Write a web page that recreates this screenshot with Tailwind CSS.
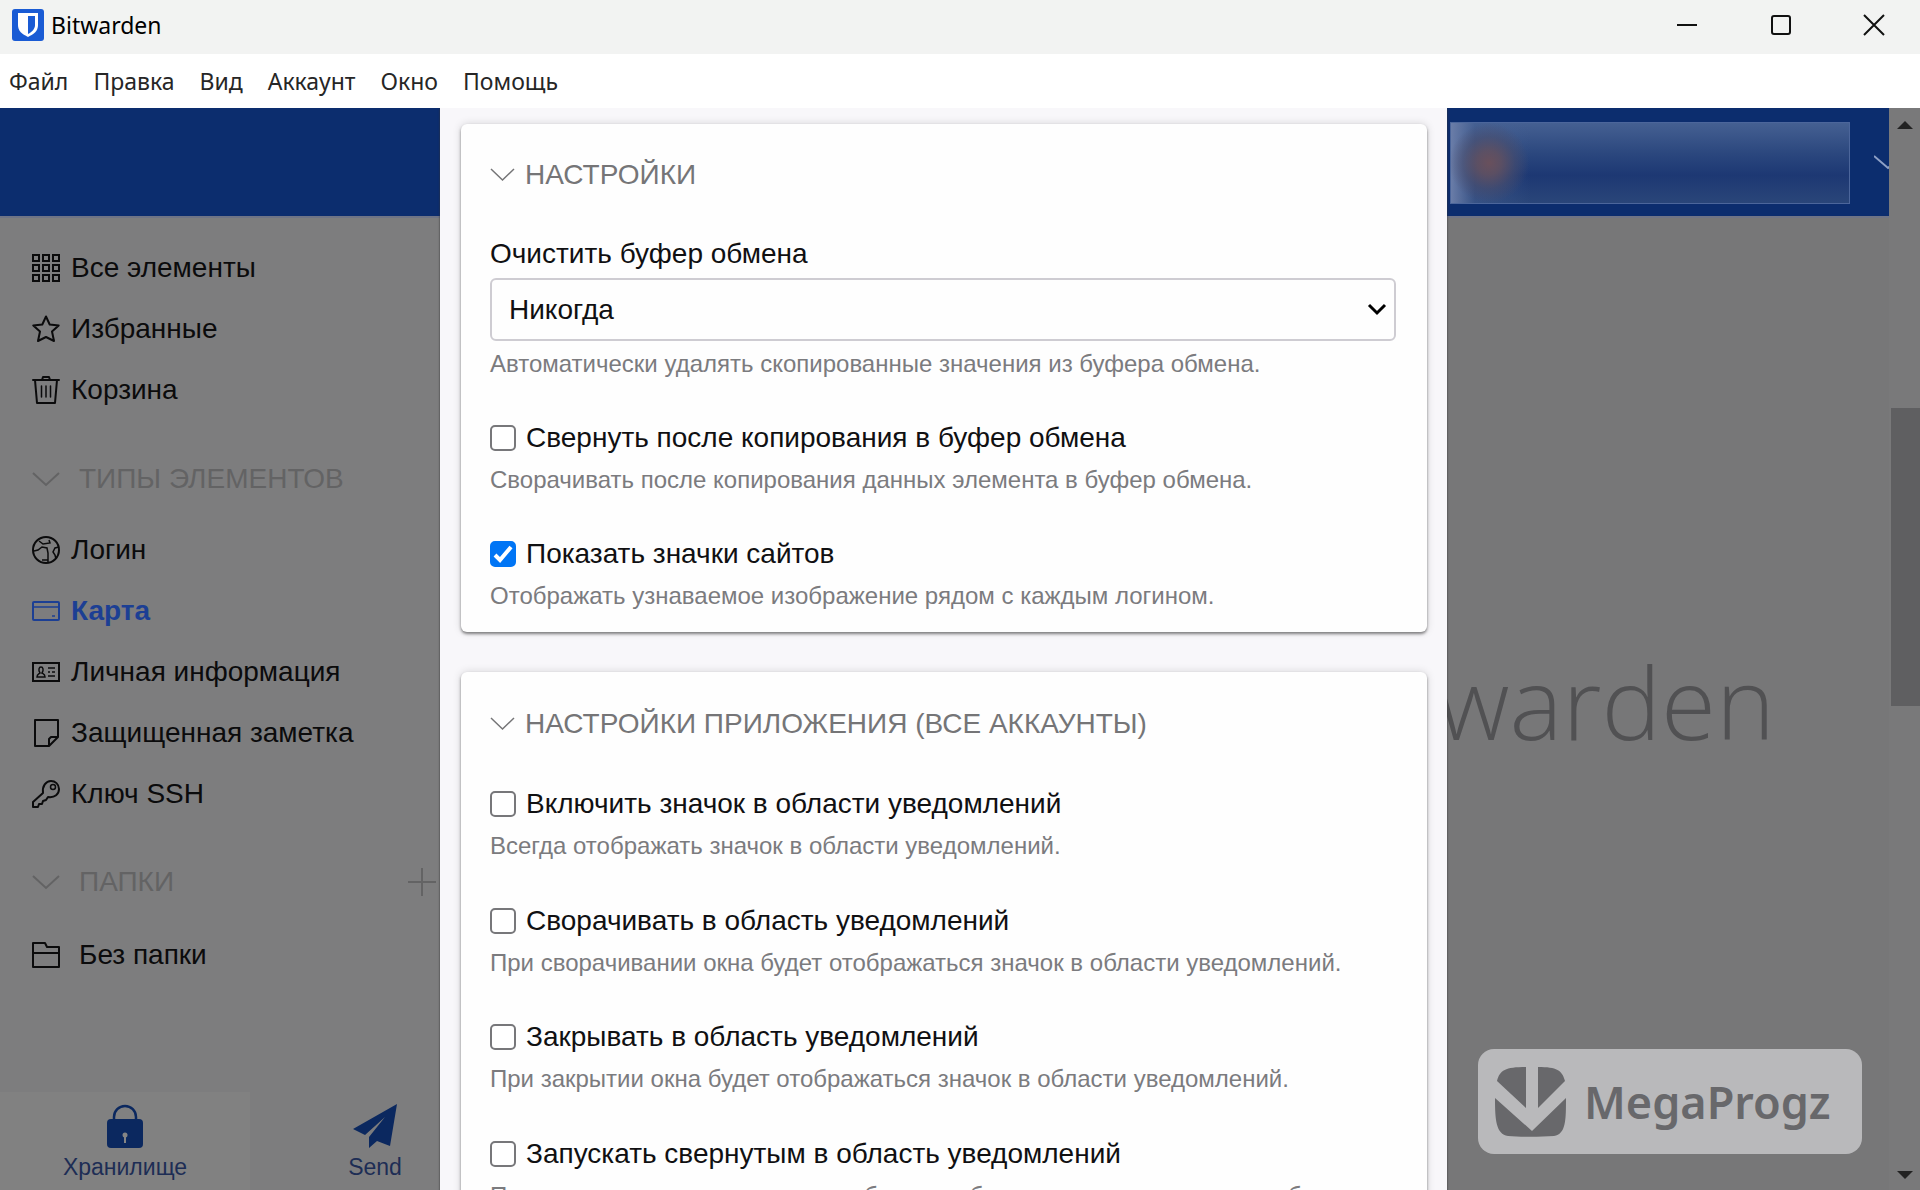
<!DOCTYPE html>
<html lang="ru">
<head>
<meta charset="utf-8">
<title>Bitwarden</title>
<script src="https://cdn.jsdelivr.net/npm/@tailwindcss/browser@4"></script>
</head>
<body class="flex h-screen flex-col overflow-hidden bg-white font-['Liberation_Sans',Arial,sans-serif] text-[28px] text-[#101012]">

<!-- Title bar -->
<header class="flex h-[54px] shrink-0 items-start justify-between bg-[#f2f3f2] font-['Noto_Sans','Open_Sans',sans-serif]">
  <div class="flex h-[50px] items-center gap-[7px] pl-3">
    <svg class="h-8 w-8" viewBox="0 0 32 32"><rect x="0" y="0" width="32" height="32" rx="3" fill="#1a5bd4"/><path d="M6 4h20v12c0 6-4 9-10 12C10 25 6 22 6 16z" fill="#fff"/><path d="M16 7h7v9c0 4-3 7-7 9z" fill="#1a5bd4"/></svg>
    <h1 class="text-[23px] text-black">Bitwarden</h1>
  </div>
  <div class="flex h-[50px]">
    <button type="button" aria-label="Свернуть" class="flex w-[93px] items-center justify-center"><svg class="h-6 w-6" viewBox="0 0 24 24" fill="none" stroke="#111" stroke-width="2"><path d="M2 12h20"/></svg></button>
    <button type="button" aria-label="Развернуть" class="flex w-[95px] items-center justify-center"><svg class="h-6 w-6" viewBox="0 0 24 24" fill="none" stroke="#111" stroke-width="2"><rect x="3" y="3" width="18" height="18" rx="2"/></svg></button>
    <button type="button" aria-label="Закрыть" class="flex w-[92px] items-center justify-center"><svg class="h-6 w-6" viewBox="0 0 24 24" fill="none" stroke="#111" stroke-width="2"><path d="M2 2l20 20M22 2L2 22"/></svg></button>
  </div>
</header>

<!-- Menu bar -->
<nav class="flex h-[54px] shrink-0 items-center gap-[25px] bg-white pl-[9px] font-['Noto_Sans','Open_Sans',sans-serif] text-[23px] text-[#262626]">
  <a href="#">Файл</a><a href="#">Правка</a><a href="#">Вид</a><a href="#">Аккаунт</a><a href="#">Окно</a><a href="#">Помощь</a>
</nav>

<div class="flex min-h-0 flex-1">
  <div class="relative flex min-w-0 flex-1 flex-col bg-[#777778]">

    <!-- App header -->
    <div class="flex h-[110px] shrink-0 items-center justify-end overflow-hidden border-b-2 border-[#6f7486] bg-[#0c2d6e] pt-[2px]">
      <div class="h-[82px] w-[400px] border border-[#4c669b] bg-[radial-gradient(circle_at_38px_40px,#69505c_0,#62505fdd_12px,#4c4c6888_26px,transparent_40px),linear-gradient(90deg,#6a7da8_0,#46609277_24px,transparent_80px),linear-gradient(180deg,#456092_0,#2a467d_40%,#1d3873_65%,#2a4679_100%)]"></div>
      <svg class="-mr-[13px] ml-6 h-7 w-7 shrink-0" viewBox="0 0 28 28" fill="none" stroke="#8ea0c6" stroke-width="2"><path d="M0 7l14 12 14-12"/></svg>
    </div>

    <div class="flex min-h-0 flex-1">
      <!-- Vault sidebar -->
      <aside class="flex w-[500px] shrink-0 flex-col bg-[#7d7d7e] text-[#0b0b0c]">
        <ul class="pt-[19px]">
          <li><a href="#" class="flex h-[61px] items-center gap-[11px] pl-8"><svg class="h-7 w-7" viewBox="0 0 28 28" fill="none" stroke="currentColor" stroke-width="2"><path d="M1 1h6v6H1zM11 1h6v6h-6zM21 1h6v6h-6zM1 11h6v6H1zM11 11h6v6h-6zM21 11h6v6h-6zM1 21h6v6H1zM11 21h6v6h-6zM21 21h6v6h-6z"/></svg>Все элементы</a></li>
          <li><a href="#" class="flex h-[61px] items-center gap-[11px] pl-8"><svg class="h-7 w-7" viewBox="0 0 28 28" fill="none" stroke="currentColor" stroke-width="2" stroke-linejoin="round"><path d="M14 1.500l3.700 8 9 1-6.700 6 2 9.500-8-4-8 4 2-9.500-6.700-6 9-1z"/></svg>Избранные</a></li>
          <li><a href="#" class="flex h-[61px] items-center gap-[11px] pl-8"><svg class="h-7 w-7" viewBox="0 0 28 28" fill="none" stroke="currentColor" stroke-width="2" stroke-linecap="round" stroke-linejoin="round"><path d="M1 4h26M10 4l1-3h6l1 3M3 4l2 23h18l2-23"/><path d="M9.500 10v11M14 10v11M18.500 10v11" stroke-width="1.500"/></svg>Корзина</a></li>
        </ul>
        <h2 class="flex h-[99px] items-center gap-[19px] pt-[19px] pl-8 text-[#636364]"><svg class="h-7 w-7" viewBox="0 0 28 28" fill="none" stroke="currentColor" stroke-width="2"><path d="M1 8l13 12L27 8"/></svg>ТИПЫ ЭЛЕМЕНТОВ</h2>
        <ul>
          <li><a href="#" class="flex h-[61px] items-center gap-[11px] pl-8"><svg class="h-7 w-7" viewBox="0 0 28 28" fill="none" stroke="currentColor" stroke-width="2"><circle cx="14" cy="14" r="13"/><path d="M7 5l4 3 7-1-1-3M2 15l4-1 4-3 5 1 1 5v9M10 24h6M27 11l-4 1-2 4 2 3 1 4" stroke-width="1.500"/></svg>Логин</a></li>
          <li><a href="#" aria-current="page" class="flex h-[61px] items-center gap-[11px] pl-8 font-bold text-[#1c3f94]"><svg class="h-7 w-7" viewBox="0 0 28 28" fill="none" stroke="currentColor" stroke-width="2"><rect x="1" y="5" width="26" height="18" rx="1"/><path d="M1 10h26M20 19h3" stroke-width="1.500"/></svg>Карта</a></li>
          <li><a href="#" class="flex h-[61px] items-center gap-[11px] pl-8"><svg class="h-7 w-7" viewBox="0 0 28 28" fill="none" stroke="currentColor" stroke-width="2"><rect x="1" y="5" width="26" height="18"/><path d="M5 19c0-3 2-3 3-4-2-3-1-6 1-6s3 3 1 6c2 1 3 1 3 4zM16 10h7M16 14h2M20 14h3M16 18h7" stroke-width="1.500"/></svg>Личная информация</a></li>
          <li><a href="#" class="flex h-[61px] items-center gap-[11px] pl-8"><svg class="h-7 w-7" viewBox="0 0 28 28" fill="none" stroke="currentColor" stroke-width="2" stroke-linejoin="round"><path d="M3 1h23v17l-9 9H3zM17 27v-7l2-2h7"/></svg>Защищенная заметка</a></li>
          <li><a href="#" class="flex h-[61px] items-center gap-[11px] pl-8"><svg class="h-7 w-7" viewBox="0 0 28 28" fill="none" stroke="currentColor" stroke-width="2" stroke-linejoin="round"><path d="M1 22l10-9c-1-7 3-12 8-12 4 0 8 3 8 8s-4 9-11 8l-2 3-3 1-1 3-3 0-1 3H1z"/><circle cx="21" cy="7" r="2.500" stroke-width="1.500"/></svg>Ключ SSH</a></li>
        </ul>
        <div class="flex h-[100px] items-center justify-between pt-4 pr-16 pl-8 text-[#636364]">
          <h2 class="flex items-center gap-[19px]"><svg class="h-7 w-7" viewBox="0 0 28 28" fill="none" stroke="currentColor" stroke-width="2"><path d="M1 8l13 12L27 8"/></svg>ПАПКИ</h2>
          <button type="button" aria-label="Добавить папку"><svg class="h-7 w-7" viewBox="0 0 28 28" fill="none" stroke="currentColor" stroke-width="2"><path d="M14 0v28M0 14h28"/></svg></button>
        </div>
        <a href="#" class="flex h-[61px] items-center gap-[19px] pl-8"><svg class="h-7 w-7" viewBox="0 0 28 28" fill="none" stroke="currentColor" stroke-width="2" stroke-linejoin="round"><path d="M1 2h12l2 4h12v20H1zM1 12h26"/></svg>Без папки</a>
        <div class="mt-auto grid h-[98px] grid-cols-2 text-[23px] leading-[38px] text-[#1d2d55]">
          <a href="#" class="flex flex-col items-center bg-[#818181] pt-3"><svg class="h-11 w-11" viewBox="0 0 44 44"><path d="M11 19V13a11 11 0 0 1 22 0v6" fill="none" stroke="#0b285f" stroke-width="2.500"/><rect x="4" y="15" width="36" height="29" rx="4" fill="#0b285f"/><circle cx="22" cy="31" r="2.500" fill="#858585"/><path d="M22 31v8" stroke="#858585" stroke-width="2"/></svg>Хранилище</a>
          <a href="#" class="flex flex-col items-center pt-3"><svg class="h-11 w-11" viewBox="0 0 44 44" fill="#0b285f"><path d="M44 0L0 25l12 6 20-18-16 20v11l8-7 13 5z"/></svg>Send</a>
        </div>
      </aside>

      <!-- Empty item pane with the wordmark -->
      <main class="flex min-w-0 flex-1 flex-col items-end overflow-hidden pr-[114px]">
        <p class="pt-[423px] font-['Open_Sans',sans-serif] text-[100px] leading-[120px] font-light text-[#515153]">bitwarden</p>
      </main>
    </div>

    <!-- Settings dialog -->
    <div class="absolute inset-0 flex justify-center overflow-hidden pr-[2px]">
      <div role="dialog" aria-label="Настройки" class="flex h-max w-[1007px] flex-col gap-10 bg-[#f8f7fa] py-4 pr-5 pl-[21px] shadow-[0_0_2px_#333]">

        <section class="rounded-md bg-[#fefefe] pt-[31px] pr-[31px] pb-[21px] pl-[29px] shadow-[0_2px_3px_rgba(0,0,0,0.45),0_0_8px_rgba(0,0,0,0.15)]">
          <h2><button type="button" class="flex h-10 items-center gap-[10px] text-[#757577]"><svg class="h-6 w-[25px]" viewBox="0 0 25 24" fill="none" stroke="currentColor" stroke-width="1.500"><path d="M1 6l11.500 11L24 6"/></svg>НАСТРОЙКИ</button></h2>
          <div class="mt-[39px]">
            <label for="clear" class="flex h-10 items-center">Очистить буфер обмена</label>
            <div class="relative mt-1">
              <select id="clear" class="h-[63px] w-full appearance-none rounded-md border-2 border-[#ceccd2] bg-[#fefefe] px-[17px]"><option>Никогда</option></select>
              <svg class="pointer-events-none absolute top-5 right-[7px] h-6 w-6" viewBox="0 0 24 24" fill="none" stroke="#000" stroke-width="3"><path d="M4 7l8 8 8-8"/></svg>
            </div>
            <p class="mt-2 text-[24px] leading-[30px] text-[#7b7b7e]">Автоматически удалять скопированные значения из буфера обмена.</p>
          </div>
          <div class="mt-[39px]">
            <label class="flex h-10 items-center gap-[10px]"><span class="relative flex h-[26px] w-[26px]"><input type="checkbox" class="peer h-[26px] w-[26px] appearance-none rounded-[5px] border-2 border-[#77777a] bg-white checked:border-[#0075f5] checked:bg-[#0075f5]"><svg class="pointer-events-none absolute inset-0 hidden h-[26px] w-[26px] peer-checked:block" viewBox="0 0 26 26" fill="none" stroke="#fff" stroke-width="4"><path d="M5 14l5 5L21 6"/></svg></span>Свернуть после копирования в буфер обмена</label>
            <p class="mt-[7px] text-[24px] leading-[30px] text-[#7b7b7e]">Сворачивать после копирования данных элемента в буфер обмена.</p>
          </div>
          <div class="mt-[39px]">
            <label class="flex h-10 items-center gap-[10px]"><span class="relative flex h-[26px] w-[26px]"><input type="checkbox" checked class="peer h-[26px] w-[26px] appearance-none rounded-[5px] border-2 border-[#77777a] bg-white checked:border-[#0075f5] checked:bg-[#0075f5]"><svg class="pointer-events-none absolute inset-0 hidden h-[26px] w-[26px] peer-checked:block" viewBox="0 0 26 26" fill="none" stroke="#fff" stroke-width="4"><path d="M5 14l5 5L21 6"/></svg></span>Показать значки сайтов</label>
            <p class="mt-[7px] text-[24px] leading-[30px] text-[#7b7b7e]">Отображать узнаваемое изображение рядом с каждым логином.</p>
          </div>
        </section>

        <section class="rounded-md bg-[#fefefe] pt-8 pr-[31px] pb-[21px] pl-[29px] shadow-[0_2px_3px_rgba(0,0,0,0.45),0_0_8px_rgba(0,0,0,0.15)]">
          <h2><button type="button" class="flex h-10 items-center gap-[10px] text-[#757577]"><svg class="h-6 w-[25px]" viewBox="0 0 25 24" fill="none" stroke="currentColor" stroke-width="1.500"><path d="M1 6l11.500 11L24 6"/></svg>НАСТРОЙКИ ПРИЛОЖЕНИЯ (ВСЕ АККАУНТЫ)</button></h2>
          <div class="mt-10">
            <label class="flex h-10 items-center gap-[10px]"><input type="checkbox" class="h-[26px] w-[26px] appearance-none rounded-[5px] border-2 border-[#77777a] bg-white">Включить значок в области уведомлений</label>
            <p class="mt-[7px] text-[24px] leading-[30px] text-[#7b7b7e]">Всегда отображать значок в области уведомлений.</p>
          </div>
          <div class="mt-10">
            <label class="flex h-10 items-center gap-[10px]"><input type="checkbox" class="h-[26px] w-[26px] appearance-none rounded-[5px] border-2 border-[#77777a] bg-white">Сворачивать в область уведомлений</label>
            <p class="mt-[7px] text-[24px] leading-[30px] text-[#7b7b7e]">При сворачивании окна будет отображаться значок в области уведомлений.</p>
          </div>
          <div class="mt-[39px]">
            <label class="flex h-10 items-center gap-[10px]"><input type="checkbox" class="h-[26px] w-[26px] appearance-none rounded-[5px] border-2 border-[#77777a] bg-white">Закрывать в область уведомлений</label>
            <p class="mt-[7px] text-[24px] leading-[30px] text-[#7b7b7e]">При закрытии окна будет отображаться значок в области уведомлений.</p>
          </div>
          <div class="mt-10">
            <label class="flex h-10 items-center gap-[10px]"><input type="checkbox" class="h-[26px] w-[26px] appearance-none rounded-[5px] border-2 border-[#77777a] bg-white">Запускать свернутым в область уведомлений</label>
            <p class="mt-[7px] text-[24px] leading-[30px] text-[#7b7b7e]">При первом запуске приложения будет отображаться только значок в области уведомлений.</p>
          </div>
        </section>
      </div>
    </div>

    <!-- Site badge -->
    <div class="absolute right-[27px] bottom-[36px] flex h-[105px] w-[384px] items-center gap-[18px] rounded-2xl bg-[#b9b9bb] pl-[17px] text-[#68686b]">
      <svg class="h-[70px] w-[71px] shrink-0" viewBox="0 0 71 70" fill="currentColor"><path d="M31 0v41L2 14C5 3 10 0 31 0zM43 0v41l27-27C67 3 62 0 43 0zM0 31l37 33 34-33c0 22 0 36-12 38-14 1-33 1-46 0C1 67 0 53 0 31z"/></svg>
      <span class="font-['Noto_Sans',sans-serif] text-[45px] font-semibold">MegaProgz</span>
    </div>
  </div>

  <!-- Window scroll bar -->
  <div class="flex w-[31px] shrink-0 flex-col items-center bg-[#79797a]">
    <svg class="mt-[13px] h-2 w-4" viewBox="0 0 16 8" fill="#222"><path d="M8 0l8 8H0z"/></svg>
    <div class="mt-[279px] ml-[2px] h-[298px] w-[29px] bg-[#5f5f61]"></div>
    <svg class="mt-auto mb-[11px] h-2 w-4" viewBox="0 0 16 8" fill="#222"><path d="M8 8L0 0h16z"/></svg>
  </div>
</div>
</body>
</html>
